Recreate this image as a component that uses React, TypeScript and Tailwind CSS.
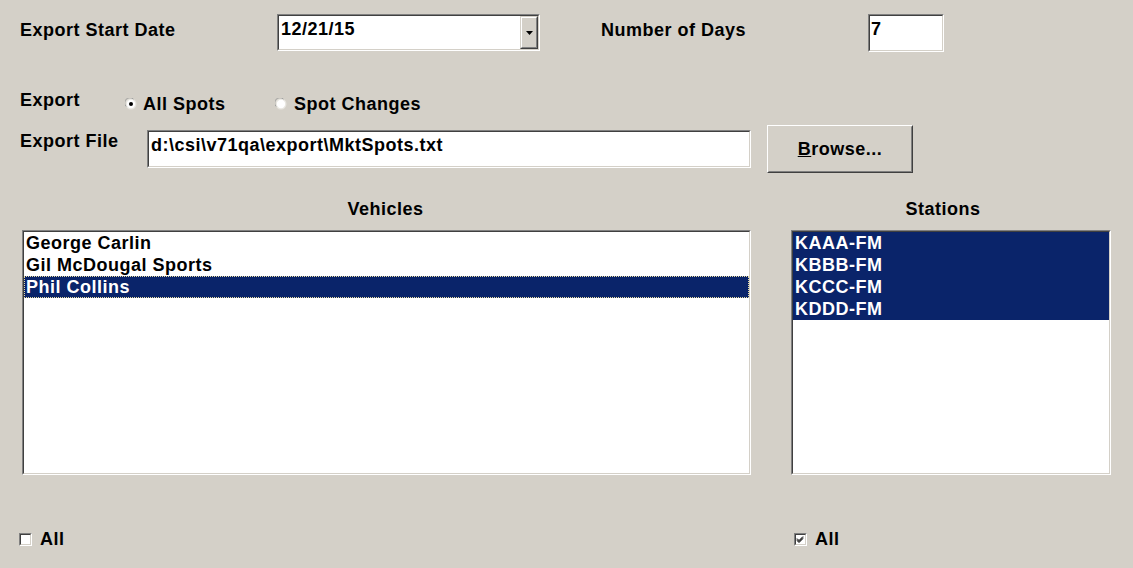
import React from 'react';

// classic Windows sunken field: two 1px bevels
function Sunken({ className = '', children }: { className?: string; children?: React.ReactNode }) {
  return (
    <div className={`border border-t-[#808080] border-l-[#808080] border-b-white border-r-white ${className}`}>
      <div className="h-full w-full border border-t-[#404040] border-l-[#404040] border-b-[#d4d0c8] border-r-[#d4d0c8] bg-white overflow-hidden">
        {children}
      </div>
    </div>
  );
}

function Radio({ checked }: { checked?: boolean }) {
  return (
    <svg width="12" height="12" viewBox="0 0 12 12" className="shrink-0">
      <circle cx="6" cy="6" r="5.5" fill="#e8e6e0" />
      <path d="M1.2 8.5 A5 5 0 0 1 8.5 1.2" fill="none" stroke="#a0a0a0" strokeWidth="1" />
      <circle cx="6" cy="6" r="4.2" fill="#ffffff" />
      {checked && <circle cx="6" cy="6" r="2" fill="#000" />}
    </svg>
  );
}

function Check({ checked }: { checked?: boolean }) {
  return (
    <div className="w-[13px] h-[13px] shrink-0 border border-t-[#808080] border-l-[#808080] border-b-white border-r-white">
      <div className="h-full w-full border border-t-[#404040] border-l-[#404040] border-b-[#d4d0c8] border-r-[#d4d0c8] bg-white">
        {checked && (
          <svg width="9" height="9" viewBox="0 0 9 9">
            <path d="M1 3.5 L3 5.5 L7 1.5 M1 4.5 L3 6.5 L7 2.5 M1 5.5 L3 7.5 L7 3.5" fill="none" stroke="#000" strokeWidth="1" />
          </svg>
        )}
      </div>
    </div>
  );
}

const VEHICLES = ['George Carlin', 'Gil McDougal Sports', 'Phil Collins'];
const STATIONS = ['KAAA-FM', 'KBBB-FM', 'KCCC-FM', 'KDDD-FM'];

export default function App() {
  return (
    <div className="w-[1133px] h-[568px] bg-[#d4d0c8] text-black font-bold text-[18px] leading-[20px] tracking-[0.5px] font-['Liberation_Sans',Arial,sans-serif] flex flex-col overflow-hidden">
      {/* Start date + days */}
      <div className="flex items-start pt-[14px]">
        <div className="w-[277px] pl-[20px] pt-[6px]">Export Start Date</div>
        <Sunken className="w-[263px] h-[37px]">
          <div className="flex h-full">
            <div className="flex-1 pl-[2px] pt-[3px]">12/21/15</div>
            <div className="w-[18px] h-full border border-t-[#d4d0c8] border-l-[#d4d0c8] border-b-[#404040] border-r-[#404040] bg-[#d4d0c8]">
              <div className="h-full w-full border border-t-white border-l-white border-b-[#808080] border-r-[#808080] flex items-center justify-center">
                <svg width="7" height="4" viewBox="0 0 7 4">
                  <path d="M0 0 H7 L3.5 4 Z" fill="#000" />
                </svg>
              </div>
            </div>
          </div>
        </Sunken>
        <div className="w-[328px] pl-[61px] pt-[6px]">Number of Days</div>
        <Sunken className="w-[76px] h-[38px]">
          <div className="pl-[1px] pt-[3px]">7</div>
        </Sunken>
      </div>

      {/* Export type */}
      <div className="flex items-start mt-[38px]">
        <div className="w-[125px] pl-[20px]">Export</div>
        <div className="flex items-center mt-[4px]">
          <div className="w-[150px] flex items-center gap-[6px]">
            <Radio checked />
            <span>All Spots</span>
          </div>
          <div className="flex items-center gap-[7px]">
            <Radio />
            <span>Spot Changes</span>
          </div>
        </div>
      </div>

      {/* Export file */}
      <div className="flex items-start mt-[11px]">
        <div className="w-[147px] pl-[20px] pt-[6px]">Export File</div>
        <Sunken className="w-[604px] h-[38px] mt-[5px]">
          <div className="pl-[2px] pt-[3px]">d:\csi\v71qa\export\MktSpots.txt</div>
        </Sunken>
        <button className="ml-[16px] w-[146px] h-[48px] border border-t-white border-l-white border-b-[#404040] border-r-[#404040] bg-[#d4d0c8] cursor-pointer">
          <div className="h-full w-full border border-t-[#d4d0c8] border-l-[#d4d0c8] border-b-[#808080] border-r-[#808080] flex items-center justify-center">
            <span><span className="underline">B</span>rowse...</span>
          </div>
        </button>
      </div>

      {/* Lists */}
      <div className="flex mt-[26px] ml-[22px] gap-[40px]">
        <div className="w-[729px] flex flex-col">
          <div className="text-center pr-[2px]">Vehicles</div>
          <Sunken className="h-[245px] mt-[11px]">
            {VEHICLES.map((v, i) => {
              const sel = i === 2;
              return (
                <div
                  key={v}
                  className={`h-[22px] leading-[23px] pl-[2px] whitespace-nowrap ${sel ? 'bg-[#0a246a] text-white outline-1 outline-dotted outline-[#e8dca0] -outline-offset-1' : ''}`}
                >
                  {v}
                </div>
              );
            })}
          </Sunken>
        </div>
        <div className="w-[320px] flex flex-col">
          <div className="text-center pr-[16px]">Stations</div>
          <Sunken className="h-[245px] mt-[11px]">
            {STATIONS.map(s => (
              <div key={s} className="h-[22px] leading-[23px] pl-[2px] bg-[#0a246a] text-white whitespace-nowrap">
                {s}
              </div>
            ))}
          </Sunken>
        </div>
      </div>

      {/* All checkboxes */}
      <div className="flex items-center mt-[54px] ml-[19px]">
        <div className="w-[775px] flex items-center gap-[8px]">
          <Check />
          <span>All</span>
        </div>
        <div className="flex items-center gap-[8px]">
          <Check checked />
          <span>All</span>
        </div>
      </div>
    </div>
  );
}
